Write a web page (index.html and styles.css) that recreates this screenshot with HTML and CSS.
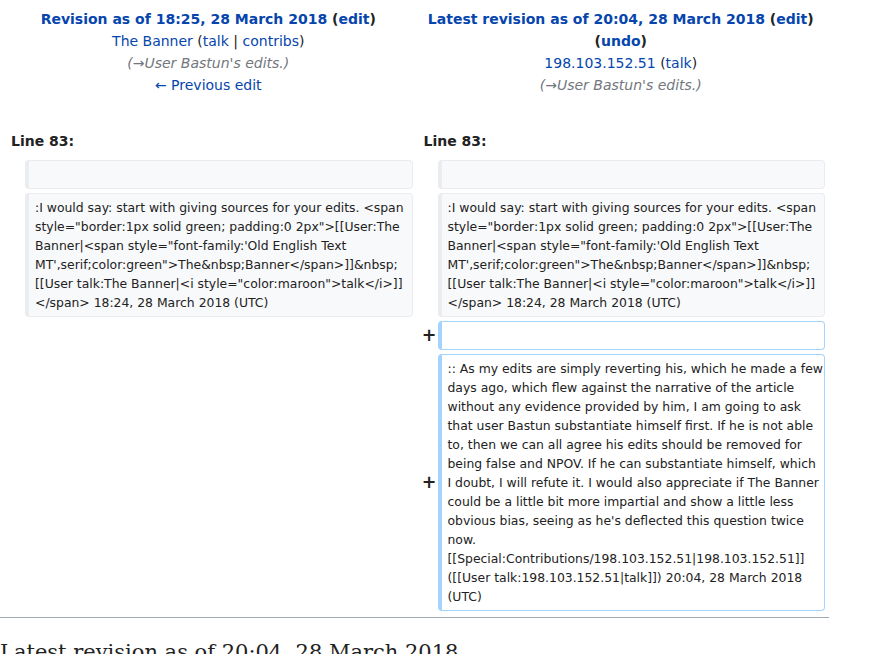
FILE: index.html
```html
<!DOCTYPE html>
<html lang="en">
<head>
<meta charset="utf-8">
<title>Diff</title>
<link rel="stylesheet" href="styles.css">
</head>
<body>
<div class="page">
<table class="diff">
  <colgroup>
    <col class="col-marker">
    <col class="col-content">
    <col class="col-marker">
    <col class="col-content">
  </colgroup>
  <tr class="title-row">
    <td colspan="2" class="title">
      <div class="t-line"><strong><a href="#" class="link">Revision as of 18:25, 28 March 2018</a> <span class="paren">(<a href="#" class="link">edit</a>)</span></strong></div>
      <div class="t-line"><a href="#" class="link">The Banner</a> <span class="tool">(<a href="#" class="link">talk</a> | <a href="#" class="link">contribs</a>)</span></div>
      <div class="t-line comment">(<a href="#" class="link-soft">→</a>User Bastun's edits.)</div>
      <div class="t-line"><a href="#" class="link">← Previous edit</a></div>
    </td>
    <td colspan="2" class="title">
      <div class="t-line"><strong><a href="#" class="link">Latest revision as of 20:04, 28 March 2018</a> <span class="paren">(<a href="#" class="link">edit</a>)</span> <span class="paren">(<a href="#" class="link">undo</a>)</span></strong></div>
      <div class="t-line"><a href="#" class="link">198.103.152.51</a> <span class="tool">(<a href="#" class="link">talk</a>)</span></div>
      <div class="t-line comment">(<a href="#" class="link-soft">→</a>User Bastun's edits.)</div>
    </td>
  </tr>
  <tr>
    <td colspan="2" class="lineno">Line 83:</td>
    <td colspan="2" class="lineno">Line 83:</td>
  </tr>
  <tr>
    <td class="marker"></td>
    <td class="line context"><div><br></div></td>
    <td class="marker"></td>
    <td class="line context"><div><br></div></td>
  </tr>
  <tr>
    <td class="marker"></td>
    <td class="line context"><div>:I would say: start with giving sources for your edits. &lt;span<br>style="border:1px solid green; padding:0 2px"&gt;[[User:The<br>Banner|&lt;span style="font-family:'Old English Text<br>MT',serif;color:green"&gt;The&amp;nbsp;Banner&lt;/span&gt;]]&amp;nbsp;<br>[[User talk:The Banner|&lt;i style="color:maroon"&gt;talk&lt;/i&gt;]]<br>&lt;/span&gt; 18:24, 28 March 2018 (UTC)</div></td>
    <td class="marker"></td>
    <td class="line context"><div>:I would say: start with giving sources for your edits. &lt;span<br>style="border:1px solid green; padding:0 2px"&gt;[[User:The<br>Banner|&lt;span style="font-family:'Old English Text<br>MT',serif;color:green"&gt;The&amp;nbsp;Banner&lt;/span&gt;]]&amp;nbsp;<br>[[User talk:The Banner|&lt;i style="color:maroon"&gt;talk&lt;/i&gt;]]<br>&lt;/span&gt; 18:24, 28 March 2018 (UTC)</div></td>
  </tr>
  <tr>
    <td colspan="2" class="empty"></td>
    <td class="marker"><span class="plus">+</span></td>
    <td class="line added"><div><br></div></td>
  </tr>
  <tr>
    <td colspan="2" class="empty"></td>
    <td class="marker"><span class="plus">+</span></td>
    <td class="line added"><div>:: As my edits are simply reverting his, which he made a few<br>days ago, which flew against the narrative of the article<br>without any evidence provided by him, I am going to ask<br>that user Bastun substantiate himself first. If he is not able<br>to, then we can all agree his edits should be removed for<br>being false and NPOV. If he can substantiate himself, which<br>I doubt, I will refute it. I would also appreciate if The Banner<br>could be a little bit more impartial and show a little less<br>obvious bias, seeing as he's deflected this question twice<br>now.<br>[[Special:Contributions/198.103.152.51|198.103.152.51]]<br>([[User talk:198.103.152.51|talk]]) 20:04, 28 March 2018<br>(UTC)</div></td>
  </tr>
</table>
<hr class="diff-hr">
<h2 class="current-title">Latest revision as of 20:04, 28 March 2018</h2>
</div>
</body>
</html>
```

FILE: styles.css
```css
html, body {
  margin: 0;
  padding: 0;
  background: #ffffff;
}

body {
  font-family: "DejaVu Sans", sans-serif;
  font-size: 14px;
  line-height: 1.6;
  color: #222222;
}

.page {
  width: 829px;
}

.diff {
  width: 100%;
  table-layout: fixed;
  border-collapse: separate;
  border-spacing: 4px;
  border: 0;
  margin: -1px 0 0 0;
}

.col-marker {
  width: 17px;
}

.diff td {
  padding: 0.33em 0.5em;
}

.title {
  text-align: center;
  vertical-align: top;
}

.title-row .title {
  padding-bottom: 4px;
}

.t-line {
  line-height: 22px;
}

.link {
  color: #0645ad;
  text-decoration: none;
}

.link-soft {
  color: #72777d;
  text-decoration: none;
}

.paren {
  color: #222222;
}

.tool {
  color: #222222;
}

.comment {
  font-style: italic;
  color: #72777d;
}

.lineno {
  font-weight: bold;
  padding-top: 26px !important;
  line-height: 22px;
}

.marker {
  text-align: right;
  font-weight: bold;
  font-size: 1.25em;
  line-height: 1.2;
  vertical-align: middle;
  padding: 0 !important;
  color: #222222;
}

.plus {
  position: relative;
  left: 3px;
}

.line {
  font-size: 12.4px;
  line-height: 19px;
  vertical-align: top;
  border-style: solid;
  border-width: 1px 1px 1px 4px;
  border-radius: 4px;
  white-space: nowrap;
  padding: 4px 6px !important;
}

.context {
  background: #f8f9fa;
  border-color: #eaecf0;
  color: #222222;
}

.added {
  background: #ffffff;
  border-color: #a3d3ff;
  color: #222222;
}

.empty {
  background: none;
}

.diff-hr {
  height: 1px;
  background: #a2a9b1;
  border: 0;
  margin: 2px 0 0 0;
}

.current-title {
  font-family: "DejaVu Serif", serif;
  font-weight: normal;
  font-size: 21px;
  line-height: 1.3;
  margin: 21px 0 0 0;
  padding: 0;
}
```
